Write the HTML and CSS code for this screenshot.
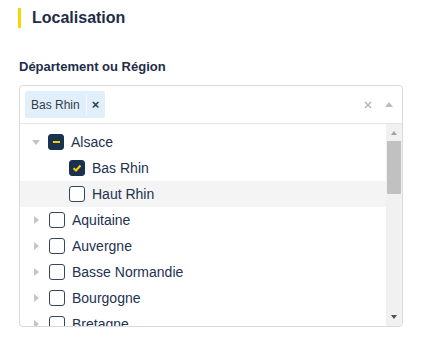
FILE: index.html
```html
<!DOCTYPE html>
<html>
<head>
    <title>Localisation</title>
    <link rel="stylesheet" href="styles.css">
</head>
<body>
    <div class="section">
        <h2 class="section-title">Localisation</h2>

        <div class="field">
            <label class="field-label">Département ou Région</label>

            <div class="tree-select">
                <div class="select-header">
                    <div class="tags">
                        <span class="tag">
                            <span class="tag-label">Bas Rhin</span>
                            <span class="tag-remove">&times;</span>
                        </span>
                    </div>
                    <div class="select-actions">
                        <svg class="clear-icon" width="8" height="8" viewBox="0 0 8 8">
                            <path d="M1 1 L7 7 M7 1 L1 7" stroke="#b5b5b5" stroke-width="1.4" fill="none"/>
                        </svg>
                        <span class="caret-up"></span>
                    </div>
                </div>

                <div class="select-body">
                    <ul class="tree">
                        <li class="node">
                            <span class="toggle toggle-open"></span>
                            <span class="check indeterminate"></span>
                            <span class="node-label">Alsace</span>
                        </li>
                        <li class="node child">
                            <span class="check checked">
                                <svg width="10" height="8" viewBox="0 0 10 8">
                                    <path d="M1.5 4.2 L4 6.5 L8.5 1.5" stroke="#f5d000" stroke-width="2" fill="none"/>
                                </svg>
                            </span>
                            <span class="node-label">Bas Rhin</span>
                        </li>
                        <li class="node child hovered">
                            <span class="check"></span>
                            <span class="node-label">Haut Rhin</span>
                        </li>
                        <li class="node">
                            <span class="toggle"></span>
                            <span class="check"></span>
                            <span class="node-label">Aquitaine</span>
                        </li>
                        <li class="node">
                            <span class="toggle"></span>
                            <span class="check"></span>
                            <span class="node-label">Auvergne</span>
                        </li>
                        <li class="node">
                            <span class="toggle"></span>
                            <span class="check"></span>
                            <span class="node-label">Basse Normandie</span>
                        </li>
                        <li class="node">
                            <span class="toggle"></span>
                            <span class="check"></span>
                            <span class="node-label">Bourgogne</span>
                        </li>
                        <li class="node">
                            <span class="toggle"></span>
                            <span class="check"></span>
                            <span class="node-label">Bretagne</span>
                        </li>
                    </ul>

                    <div class="scrollbar">
                        <span class="scroll-btn scroll-up"></span>
                        <span class="scroll-thumb"></span>
                        <span class="scroll-track"></span>
                        <span class="scroll-btn scroll-down"></span>
                    </div>
                </div>
            </div>
        </div>
    </div>
</body>
</html>
```

FILE: styles.css
```css
body {
    margin: 0;
    padding: 8px 18px 0 18px;
    font-family: "Liberation Sans", Arial, sans-serif;
    color: #1e2c48;
    background: #ffffff;
}

.section-title {
    margin: 0;
    padding-left: 11px;
    border-left: 3px solid #f5d800;
    font-size: 16px;
    line-height: 20px;
    font-weight: bold;
    color: #1e2c48;
}

.field {
    margin-top: 31px;
    padding-left: 1px;
}

.field-label {
    display: block;
    font-size: 13px;
    line-height: 16px;
    font-weight: bold;
    color: #1e2c48;
    margin-bottom: 10px;
}

.tree-select {
    width: 384px;
    box-sizing: border-box;
    border: 1px solid #dadada;
    border-radius: 4px;
    overflow: hidden;
}

/* Header with selected tags */
.select-header {
    display: flex;
    align-items: center;
    justify-content: space-between;
    padding: 5px 9px 5px 5px;
    border-bottom: 1px solid #e6e6e6;
}

.tags {
    display: flex;
    gap: 4px;
}

.tag {
    display: flex;
    align-items: center;
    height: 27px;
    background-color: #e1effb;
    border-radius: 2px;
    font-size: 12px;
    color: #333c4a;
}

.tag-label {
    padding: 0 6px;
}

.tag-remove {
    display: flex;
    align-items: center;
    height: 21px;
    padding: 0 6px 0 5px;
    border-left: 1px solid #f4f9fe;
    font-size: 13px;
    font-weight: bold;
    color: #2f3a4a;
}

.select-actions {
    display: flex;
    align-items: center;
    gap: 13px;
}

.clear-icon {
    display: block;
}

.caret-up {
    width: 0;
    height: 0;
    border-left: 4.5px solid transparent;
    border-right: 4.5px solid transparent;
    border-bottom: 5px solid #bdbdbd;
}

/* Tree list */
.select-body {
    display: flex;
    height: 202px;
}

.tree {
    flex: 1;
    list-style: none;
    margin: 0;
    padding: 5px 0 0 0;
    overflow: hidden;
}

.node {
    display: flex;
    align-items: center;
    height: 26px;
    padding-left: 12px;
    font-size: 14px;
    color: #22324f;
}

.node.child {
    padding-left: 49px;
}

.node.hovered {
    background-color: #f4f4f4;
}

.toggle {
    width: 0;
    height: 0;
    margin: 0 10px 0 2px;
    border-top: 4px solid transparent;
    border-bottom: 4px solid transparent;
    border-left: 5px solid #c4c4c4;
}

.toggle-open {
    margin: 0 8px 0 0;
    border-left: 4.5px solid transparent;
    border-right: 4.5px solid transparent;
    border-top: 5px solid #c4c4c4;
    border-bottom: none;
}

.check {
    display: flex;
    align-items: center;
    justify-content: center;
    width: 16px;
    height: 16px;
    box-sizing: border-box;
    border: 1.5px solid #34465f;
    border-radius: 3px;
    background: #ffffff;
    margin-right: 7px;
    flex-shrink: 0;
}

.check.checked,
.check.indeterminate {
    background: #1b3150;
    border-color: #1b3150;
}

.check.indeterminate::after {
    content: "";
    width: 7px;
    height: 2px;
    background: #f5d000;
}

.check svg {
    display: block;
}

/* Fake scrollbar */
.scrollbar {
    display: flex;
    flex-direction: column;
    align-items: center;
    width: 16px;
    background: #f1f1f1;
}

.scroll-btn {
    width: 0;
    height: 0;
    border-left: 3.5px solid transparent;
    border-right: 3.5px solid transparent;
}

.scroll-up {
    margin: 7px 0 6px;
    border-bottom: 4px solid #a3a3a3;
}

.scroll-thumb {
    width: 14px;
    height: 53px;
    background: #c1c1c1;
}

.scroll-track {
    flex: 1;
}

.scroll-down {
    margin: 6px 0 7px;
    border-top: 4px solid #505050;
}
```
